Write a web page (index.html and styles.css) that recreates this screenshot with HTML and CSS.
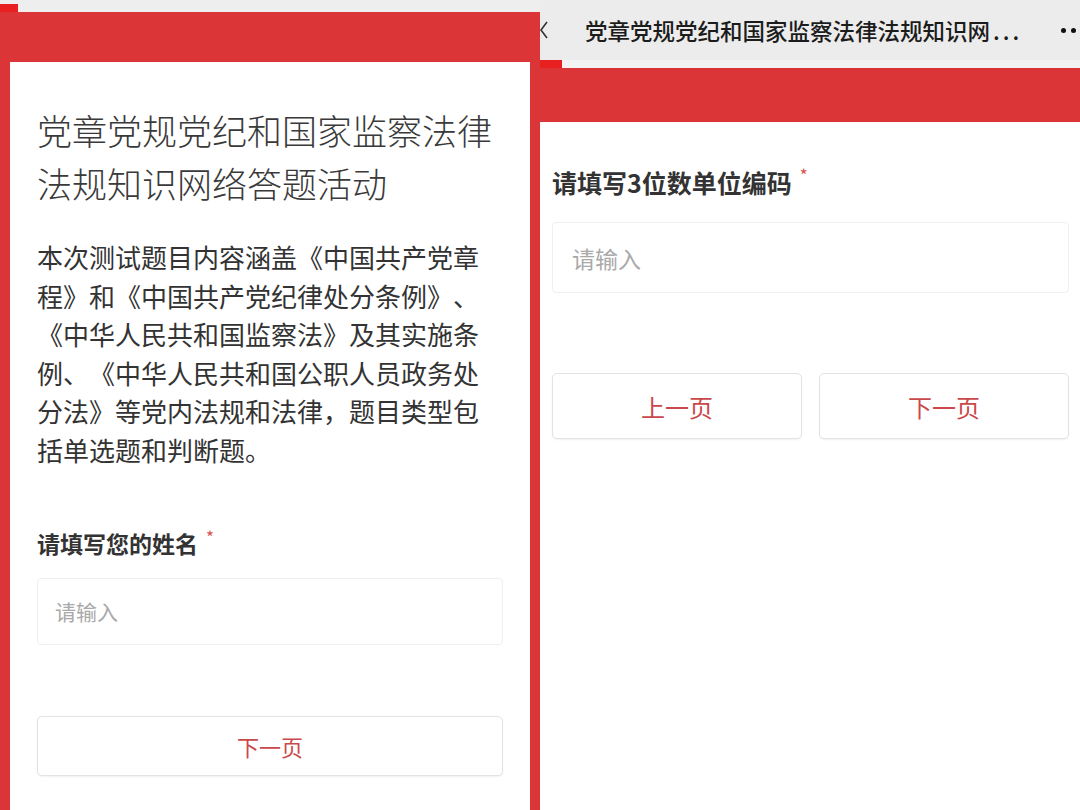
FILE: index.html
```html
<!DOCTYPE html>
<html lang="zh-CN">

<head>
    <meta charset="UTF-8">
    <meta name="viewport" content="width=device-width, initial-scale=1.0">
    <title>党章党规党纪和国家监察法律法规知识网络答题活动</title>
    <link rel="stylesheet" href="styles.css">
</head>

<body>
    <div class="shots">
        <!-- first page: intro + name -->
        <div class="shot shot-left">
            <div class="top-strip"><span class="notch"></span></div>
            <div class="banner"></div>
            <div class="card">
                <h1 class="title">党章党规党纪和国家监察法律法规知识网络答题活动</h1>
                <p class="intro">本次测试题目内容涵盖《中国共产党章程》和《中国共产党纪律处分条例》、《中华人民共和国监察法》及其实施条例、《中华人民共和国公职人员政务处分法》等党内法规和法律，题目类型包括单选题和判断题。</p>
                <label class="field-label">请填写您的姓名<span class="req">*</span></label>
                <input class="field-input" type="text" placeholder="请输入">
                <div class="pager">
                    <button class="btn">下一页</button>
                </div>
            </div>
        </div>

        <!-- second page: unit code -->
        <div class="shot shot-right">
            <div class="navbar">
                <svg class="nav-close" width="8" height="18" viewBox="0 0 8 18">
                    <polyline points="7,1 1,9 7,17" fill="none" stroke="#333" stroke-width="1.6" />
                </svg>
                <div class="nav-title">党章党规党纪和国家监察法律法规知识网<span class="dots">...</span></div>
                <div class="nav-more"><i></i><i></i></div>
            </div>
            <div class="nav-gap"><span class="notch"></span></div>
            <div class="banner banner-right"></div>
            <div class="page">
                <label class="field-label">请填写3位数单位编码<span class="req">*</span></label>
                <input class="field-input" type="text" placeholder="请输入">
                <div class="pager">
                    <button class="btn">上一页</button>
                    <button class="btn">下一页</button>
                </div>
            </div>
        </div>
    </div>
</body>

</html>
```

FILE: styles.css
```css
* {
    margin: 0;
    padding: 0;
    box-sizing: border-box;
    font-family: "Noto Sans CJK SC", "Noto Sans", sans-serif;
}

body {
    background: #fff;
    overflow: hidden;
}

.shots {
    display: flex;
    width: 1080px;
    height: 810px;
}

.shot {
    width: 540px;
    display: flex;
    flex-direction: column;
}

/* ---------- left shot ---------- */

.shot-left {
    background: #dc3537;
}

.top-strip {
    height: 12px;
    background: #eeeeee;
    display: flex;
    align-items: flex-end;
}

.top-strip .notch {
    width: 18px;
    height: 8px;
    background: #e8201f;
}

.banner {
    height: 50px;
    background: #dc3537;
}

.card {
    flex: 1;
    margin: 0 10px;
    background: #fff;
    padding: 41px 27px 0;
    display: flex;
    flex-direction: column;
}

.title {
    font-size: 35px;
    line-height: 53px;
    font-weight: 300;
    color: #3a3a3a;
}

.intro {
    margin-top: 29px;
    padding-right: 10px;
    font-size: 26px;
    line-height: 38.6px;
    color: #333;
    text-spacing-trim: space-all;
}

.field-label {
    display: block;
    font-size: 23px;
    line-height: 32px;
    font-weight: 700;
    color: #333;
}

.req {
    color: #d9534f;
    font-size: 17px;
    font-weight: 400;
    vertical-align: top;
    margin-left: 8px;
    line-height: 20px;
}

.card .field-label {
    margin-top: 57px;
}

.field-input {
    width: 100%;
    border: 1px solid #efefef;
    border-radius: 4px;
    outline: none;
    background: #fff;
    color: #333;
}

.field-input::placeholder {
    color: #a9a9a9;
}

.card .field-input {
    margin-top: 19px;
    height: 67px;
    padding: 0 17px;
    font-size: 21px;
}

.pager {
    display: flex;
    gap: 17px;
}

.btn {
    flex: 1;
    background: #fff;
    border: 1px solid #e3e3e3;
    border-radius: 5px;
    box-shadow: 0 1px 2px rgba(0, 0, 0, 0.06);
    color: #c9484a;
    cursor: pointer;
}

.card .pager {
    margin-top: 71px;
}

.card .btn {
    height: 60px;
    font-size: 22px;
}

/* ---------- right shot ---------- */

.shot-right {
    background: #fff;
}

.navbar {
    height: 60px;
    background: #ececec;
    display: flex;
    align-items: center;
    padding-right: 4px;
}

.nav-close {
    flex-shrink: 0;
}

.nav-title {
    margin-left: 37px;
    font-size: 22.5px;
    font-weight: 500;
    color: #1c1c1c;
    white-space: nowrap;
}

.nav-title .dots {
    margin-left: 3px;
    letter-spacing: 3px;
}

.nav-more {
    margin-left: auto;
    display: flex;
    gap: 5px;
}

.nav-more i {
    width: 5px;
    height: 5px;
    border-radius: 50%;
    background: #111;
}

.nav-gap {
    height: 8px;
    background: #f3f3f3;
    display: flex;
}

.nav-gap .notch {
    width: 22px;
    background: #e8201f;
}

.banner-right {
    height: 54px;
}

.page {
    flex: 1;
    padding: 43px 11px 0 12px;
}

.page .field-label {
    font-size: 25px;
    line-height: 34px;
}

.page .field-input {
    margin-top: 23px;
    height: 71px;
    padding: 0 19px;
    font-size: 23px;
}

.page .pager {
    margin-top: 80px;
}

.page .btn {
    height: 66px;
    font-size: 24px;
}
```
